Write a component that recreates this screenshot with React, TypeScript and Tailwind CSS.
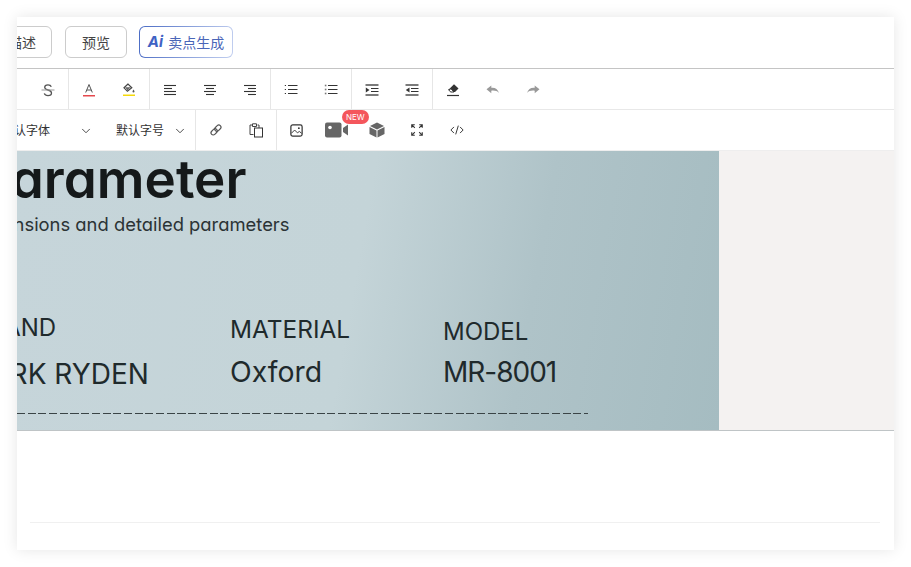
import { ChevronDown } from "lucide-react";
import type { ReactNode } from "react";

const CJK = "font-['Inter','Noto_Sans_CJK_SC',sans-serif]";

// toolbar glyphs are all on a 16 grid
const Glyph = ({ children, size = 16 }: { children: ReactNode; size?: number }) => (
  <svg width={size} height={size} viewBox="0 0 16 16" fill="none" stroke="#333" strokeWidth="1">
    {children}
  </svg>
);

const Lines = ({ rows }: { rows: [number, number][] }) => (
  <Glyph>
    {rows.map(([a, b], i) => (
      <line key={i} x1={a} x2={b} y1={3.5 + i * 3} y2={3.5 + i * 3} strokeWidth="1.1" />
    ))}
  </Glyph>
);

const Strike = () => (
  <Glyph>
    <path d="M11.300 4.800C10.800 3.500 9.600 2.800 8 2.800c-2 0-3.300 1-3.300 2.500 0 1.400 1 2.100 3.300 2.700 2.400.6 3.500 1.400 3.500 3 0 1.500-1.400 2.600-3.500 2.600-1.900 0-3.200-.8-3.700-2.200" stroke="#555" strokeWidth="1.300" />
    <line x1="1.500" x2="14.500" y1="8" y2="8" stroke="#999" />
  </Glyph>
);

const FontColor = () => (
  <Glyph>
    <path d="M4.700 10.500 8 2.500l3.300 8M5.800 8h4.400" stroke="#555" />
    <rect x="2" y="13" width="12" height="1.500" fill="#e5484d" stroke="none" />
  </Glyph>
);

const Fill = () => (
  <Glyph>
    <path d="M7 2 3 5.800l3.400 3.500 4.400-3.600L7 2Z" fill="#fff" stroke="#444" strokeWidth="1.200" />
    <path d="M4 5.300h5.800l-3.400 3.200Z" fill="#666" stroke="none" />
    <path d="M12.500 7.500c.7 1 1 1.500 1 2a1 1 0 0 1-2 0c0-.5.3-1 1-2Z" fill="#555" stroke="none" />
    <rect x="2" y="12.500" width="12" height="1.500" fill="#f5d90a" stroke="none" />
  </Glyph>
);

const Bullets = ({ ordered }: { ordered?: boolean }) => (
  <Glyph>
    {[3.500, 7.500, 11.500].map((y) => (
      <g key={y}>
        <line x1="5" x2="14.500" y1={y} y2={y} />
        <line x1="1.800" x2={ordered ? 3.400 : 3} y1={y} y2={y} strokeWidth={ordered ? 1.600 : 1.200} stroke={ordered ? "#777" : "#333"} />
      </g>
    ))}
  </Glyph>
);

const Indent = ({ out }: { out?: boolean }) => (
  <Glyph>
    <line x1="1.500" x2="14.500" y1="3" y2="3" strokeWidth="1.300" />
    <line x1="1.500" x2="14.500" y1="13" y2="13" strokeWidth="1.300" />
    <line x1="7" x2="14.500" y1="6.500" y2="6.500" />
    <line x1="7" x2="14.500" y1="9.500" y2="9.500" />
    <path d={out ? "M5.500 5.500v5L1.800 8Z" : "M1.800 5.500v5L5.500 8Z"} fill="#333" stroke="none" />
  </Glyph>
);

const Eraser = () => (
  <Glyph>
    <path d="M9 2.300 13.500 6.500 10 10H5.800L3.500 7.800 9 2.300Z" fill="#333" stroke="none" />
    <path d="M3.500 7.800 5.800 10H9L6 6.800Z" fill="#fff" stroke="#333" />
    <line x1="2" x2="14" y1="13.500" y2="13.500" strokeWidth="1.200" />
  </Glyph>
);

const Undo = ({ flip }: { flip?: boolean }) => (
  <Glyph>
    <g transform={flip ? "matrix(-1 0 0 1 16 0)" : undefined}>
      <path d="M6.300 3.500v2.300c3.800-.4 6.400 1.200 7.700 5.200-1.800-1.900-4.200-2.700-7.700-2.300v2.600L1.500 7.200Z" fill="#999" stroke="none" />
    </g>
  </Glyph>
);

const Link = () => (
  <Glyph size={14}>
    <g transform="rotate(-45 8 8)" stroke="#555" strokeWidth="1.300">
      <rect x="1" y="5.500" width="8" height="5" rx="2.500" />
      <rect x="7" y="5.500" width="8" height="5" rx="2.500" />
    </g>
  </Glyph>
);

const Paste = () => (
  <Glyph>
    <path d="M5 3H2v9.500h3.500" stroke="#444" />
    <path d="M4.500 1.800h4v2.700h-4Z" stroke="#444" fill="#fff" />
    <rect x="6.500" y="6" width="8" height="9" stroke="#333" fill="#fff" />
    <path d="M9.500 3H11v3" stroke="#444" />
  </Glyph>
);

const Picture = () => (
  <Glyph size={15}>
    <rect x="2" y="2" width="12" height="12" rx="2" strokeWidth="1.300" />
    <path d="m2.500 11 3.500-3.500 3 3 2-1.500 2.500 2" />
    <circle cx="10.500" cy="5.500" r="1" fill="#333" stroke="none" />
  </Glyph>
);

const Video = () => (
  <svg width="24" height="16" viewBox="0 0 24 16">
    <rect x="0" y="0.500" width="16.500" height="15" rx="2" fill="#666" />
    <circle cx="5" cy="5.500" r="1.800" fill="#fff" />
    <path d="m18 6 5-3.500v11L18 10Z" fill="#666" />
  </svg>
);

const Cube = () => (
  <svg width="16" height="16" viewBox="0 0 16 16">
    <path d="M8 .500 15 4 8 7.500 1 4Z" fill="#666" />
    <path d="M.500 5 7.500 8.500v7L.500 12Z" fill="#666" />
    <path d="M15.500 5 8.500 8.500v7l7-3.500Z" fill="#666" />
  </svg>
);

const Fullscreen = () => (
  <Glyph size={14}>
    <path d="M2 5.500V2h3.500M14 5.500V2h-3.500M2 10.500V14h3.500M14 10.500V14h-3.500M2.500 2.500l3 3M13.500 2.500l-3 3M2.500 13.500l3-3M13.500 13.500l-3-3" strokeWidth="1.300" />
  </Glyph>
);

const Code = () => (
  <Glyph size={14}>
    <path d="M4.500 4.500 1 8l3.500 3.500M11.500 4.500 15 8l-3.500 3.500M9.500 3l-3 10" strokeWidth="1.100" />
  </Glyph>
);

const Cell = ({ children, className = "" }: { children: ReactNode; className?: string }) => (
  <div className={`relative flex h-full w-[40px] shrink-0 items-center justify-center ${className}`}>{children}</div>
);

const Group = ({ children, last }: { children: ReactNode; last?: boolean }) => (
  <div className={`flex h-full ${last ? "" : "border-r border-[#e6e6e6]"}`}>{children}</div>
);

const Select = ({ label, className }: { label: string; className: string }) => (
  <div className={`flex shrink-0 items-center justify-between text-[12px] text-[#333] ${className}`}>
    <span>{label}</span>
    <ChevronDown size={14} strokeWidth={1.500} color="#333" />
  </div>
);

export default function App() {
  return (
    <div className={`h-[567px] w-[911px] overflow-hidden bg-white p-[17px] ${CJK}`}>
      <div className="flex h-[533px] w-[877px] flex-col overflow-hidden bg-white shadow-[0_0_14px_rgba(0,0,0,0.1)]">
        <div className="flex h-[52px] shrink-0 items-start gap-3 border-b border-[#c4c4c4] pt-[9px]">
          <button className="-ml-[25px] h-8 w-[60px] shrink-0 rounded-md border border-[#ccc] text-[14px] text-[#444]">描述</button>
          <button className="ml-px h-8 w-[62px] shrink-0 rounded-md border border-[#ccc] text-[14px] text-[#444]">预览</button>
          <div className="h-8 w-[94px] shrink-0 rounded-md bg-[linear-gradient(100deg,#4a6bc4,#c3d0f0)] p-px">
            <div className="flex h-full items-center justify-center gap-[5px] rounded-[5px] bg-white text-[14px] text-[#4a66b8]">
              <span className="text-[15px] font-bold italic text-[#3f62c4]">Ai</span>
              <span>卖点生成</span>
            </div>
          </div>
        </div>

        <div className="flex h-[41px] shrink-0 items-center border-b border-[#e8e8e8] pl-[11px]">
          <Group><Cell className="pt-px"><Strike /></Cell></Group>
          <Group>
            <Cell className="pt-px"><FontColor /></Cell>
            <Cell className="pt-px"><Fill /></Cell>
          </Group>
          <Group>
            <Cell className="pt-px"><Lines rows={[[2, 14], [2, 10], [2, 14], [2, 14]]} /></Cell>
            <Cell className="pt-px"><Lines rows={[[2, 14], [4, 12], [2, 14], [4, 12]]} /></Cell>
            <Cell className="pt-px"><Lines rows={[[2, 14], [6, 14], [2, 14], [6, 14]]} /></Cell>
          </Group>
          <Group>
            <Cell className="pt-px"><Bullets /></Cell>
            <Cell className="pt-px"><Bullets ordered /></Cell>
          </Group>
          <Group>
            <Cell className="pt-px"><Indent /></Cell>
            <Cell className="pt-px"><Indent out /></Cell>
          </Group>
          <Group last>
            <Cell className="pt-px"><Eraser /></Cell>
            <Cell className="pt-px"><Undo /></Cell>
            <Cell className="pt-px"><Undo flip /></Cell>
          </Group>
        </div>

        <div className="flex h-[41px] shrink-0 items-center border-b border-[#eeeeee]">
          <div className="-ml-[15px] flex h-full items-center gap-[23px] border-r border-[#e6e6e6] pr-[8px] pt-[2px]">
            <Select label="默认字体" className="w-[91px]" />
            <Select label="默认字号" className="w-[71px]" />
          </div>
          <Group>
            <Cell><Link /></Cell>
            <Cell><Paste /></Cell>
          </Group>
          <Group last>
            <Cell className="-ml-px"><Picture /></Cell>
            <Cell className="ml-px">
              <Video />
              <span className="absolute left-[25px] top-0 rounded-full bg-[#f4565c] px-[4px] text-[8px] leading-[14px] text-white">NEW</span>
            </Cell>
            <Cell><Cube /></Cell>
            <Cell><Fullscreen /></Cell>
            <Cell><Code /></Cell>
          </Group>
        </div>

        <div className="flex h-[280px] shrink-0 border-b border-[#bfc4c6] bg-[#f4f2f1]">
          <div className="h-full w-[702px] shrink-0 overflow-hidden bg-[linear-gradient(100deg,#c6d5da_0%,#c4d4d8_48%,#afc3c8_72%,#a5bcc1_100%)] text-[#1f2a2c] [font-feature-settings:'cv11']">
            <div className="-ml-[40px] whitespace-nowrap text-[53px] font-semibold leading-[56px] text-[#15191a]">Parameter</div>
            <div className="-ml-[48px] mt-[5px] whitespace-nowrap text-[18.400px] leading-[24px] text-[#2b3335]">Dimensions and detailed parameters</div>
            <div className="mt-[76px] flex">
              <div className="-ml-[52px] w-[265px] shrink-0 whitespace-nowrap">
                <div className="pl-[8px] text-[24px] leading-[32px]">BRAND</div>
                <div className="mt-[12px] text-[28px] leading-[36px]">MARK RYDEN</div>
              </div>
              <div className="w-[213px] shrink-0">
                <div className="mt-[1px] text-[24.400px] leading-[32px]">MATERIAL</div>
                <div className="mt-[9px] text-[28.400px] leading-[36px]">Oxford</div>
              </div>
              <div className="shrink-0">
                <div className="mt-[4px] text-[24px] leading-[32px]">MODEL</div>
                <div className="mt-[6px] text-[28px] tracking-[-1px] leading-[36px]">MR-8001</div>
              </div>
            </div>
            <div className="mt-[21px] h-px w-[571px] bg-[repeating-linear-gradient(90deg,#3a4446_0,#3a4446_8px,transparent_8px,transparent_10.700px)]" />
          </div>
        </div>

        <div className="flex-1 px-[13px] pt-[91px]">
          <div className="h-px w-[850px] bg-[#f0f0f0]" />
        </div>
      </div>
    </div>
  );
}
